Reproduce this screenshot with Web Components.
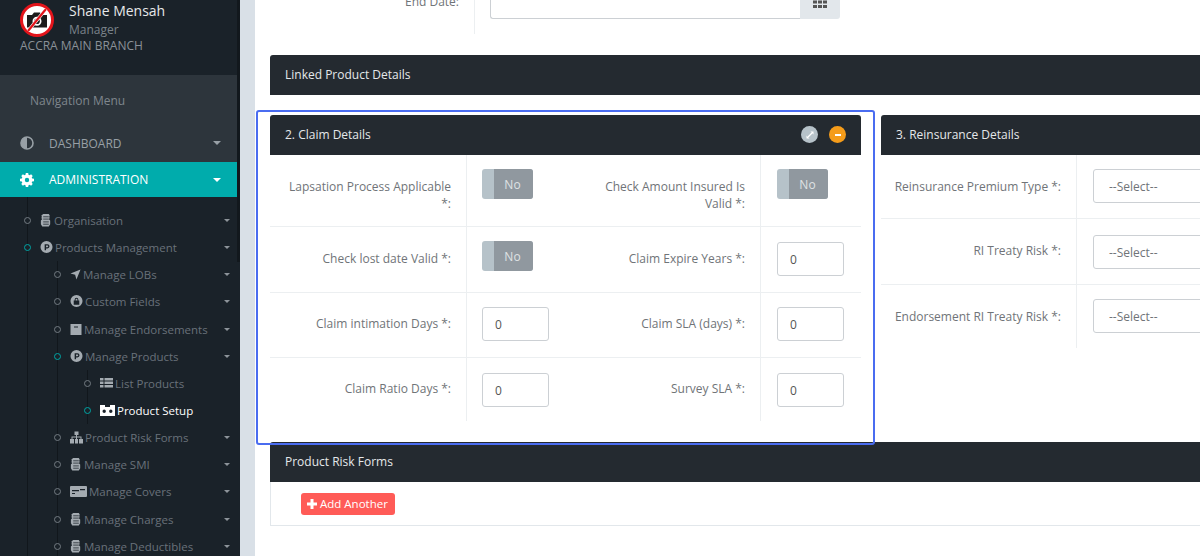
<!DOCTYPE html>
<html>
<head>
<meta charset="utf-8">
<title>Product Setup</title>
<style>
    html, body { margin: 0; height: 100%; overflow: hidden; background: #fff; }
    body { font-family: 'Open Sans', 'Noto Sans', sans-serif; font-size: 12px; }
    .cols { display: flex; gap: 20px; width: 1202px; margin-bottom: 20px; }
    .grid { display: grid; grid-template-columns: 296px 295px; }
</style>
</head>
<body>
<app-shell>
    <side-bar slot="side">
        <nav-item icon="org">Organisation</nav-item>
        <nav-item icon="p" open>Products Management</nav-item>
        <nav-sub>
            <nav-item icon="plane">Manage LOBs</nav-item>
            <nav-item icon="lock">Custom Fields</nav-item>
            <nav-item icon="box">Manage Endorsements</nav-item>
            <nav-item icon="p" open>Manage Products</nav-item>
            <nav-sub>
                <nav-item icon="list" leaf>List Products</nav-item>
                <nav-item icon="vr" leaf active>Product Setup</nav-item>
            </nav-sub>
            <nav-item icon="sitemap">Product Risk Forms</nav-item>
            <nav-item icon="org">Manage SMI</nav-item>
            <nav-item icon="card">Manage Covers</nav-item>
            <nav-item icon="org">Manage Charges</nav-item>
            <nav-item icon="org">Manage Deductibles</nav-item>
        </nav-sub>
    </side-bar>

    <form-row class="top" label="End Date:" lw="205" pt="15" style="width:570px;margin-bottom:20px"><date-field></date-field></form-row>

    <data-panel title="Linked Product Details" class="gap"></data-panel>

    <div class="cols">
        <data-panel title="2. Claim Details" tools>
            <div class="grid">
                <form-row label="Lapsation Process Applicable *:" h="72" lw="197" pl="15" pt="14"><no-toggle></no-toggle></form-row>
                <form-row label="Check Amount Insured Is Valid *:" h="72" pt="14"><no-toggle></no-toggle></form-row>
                <form-row label="Check lost date Valid *:" h="66" lw="197" pl="15" pt="14" lp="24"><no-toggle></no-toggle></form-row>
                <form-row label="Claim Expire Years *:" h="66" pt="15" lp="24"><num-input></num-input></form-row>
                <form-row label="Claim intimation Days *:" h="65" lw="197" pl="15" pt="14" lp="23"><num-input></num-input></form-row>
                <form-row label="Claim SLA (days) *:" h="65" pt="14" lp="23"><num-input></num-input></form-row>
                <form-row label="Claim Ratio Days *:" h="64" lw="197" pl="15" pt="15" lp="23" last><num-input></num-input></form-row>
                <form-row label="Survey SLA *:" h="64" pt="15" lp="23" last><num-input></num-input></form-row>
            </div>
        </data-panel>
        <data-panel title="3. Reinsurance Details">
            <form-row label="Reinsurance Premium Type *:" h="64" lw="196" wide pt="14"><select-box></select-box></form-row>
            <form-row label="RI Treaty Risk *:" h="66" lw="196" wide pt="16" lp="24"><select-box></select-box></form-row>
            <form-row label="Endorsement RI Treaty Risk *:" h="64" lw="196" wide pt="14" lp="24" last><select-box></select-box></form-row>
        </data-panel>
    </div>

    <data-panel title="Product Risk Forms" boxed>
        <add-button>Add Another</add-button>
    </data-panel>
</app-shell>
<highlight-box></highlight-box>

<template id="icons">
    <svg data-i="half" viewBox="0 0 14 14"><circle cx="7" cy="7" r="6" fill="none" stroke="currentColor" stroke-width="1.6"/><path d="M7 1a6 6 0 0 0 0 12z" fill="currentColor"/></svg>
    <svg data-i="cog" viewBox="0 0 14 14"><path fill="currentColor" fill-rule="evenodd" d="M5.8 0h2.4l.3 1.8 1.1.5 1.5-1 1.6 1.6-1 1.5.5 1.1 1.8.3v2.4l-1.8.3-.5 1.1 1 1.5-1.6 1.6-1.5-1-1.1.5-.3 1.8H5.800l-.3-1.800-1.100-.5-1.500 1-1.600-1.600 1-1.500-.5-1.100L0 8.200V5.800l1.800-.3.5-1.100-1-1.500 1.600-1.600 1.500 1 1.100-.5zM7 4.800a2.200 2.200 0 1 0 0 4.400 2.200 2.200 0 0 0 0-4.400z"/></svg>
    <svg data-i="org" viewBox="0 0 12 14"><path fill="currentColor" d="M3 0h6l1 1.500-.5 1.500.5 1.500-1 1 1.500 1.500v4l-1.500 2.500h-7L.5 11V7L2 5.500l-1-1L1.500 3 1 1.500z"/><path stroke="#1a2229" stroke-width=".8" d="M3 3h6M3 5.500h6M3 8.500h6M3 11h6"/></svg>
    <svg data-i="p" viewBox="0 0 14 14"><path fill="currentColor" fill-rule="evenodd" d="M7 0a6.500 6.500 0 1 1 0 13A6.500 6.500 0 0 1 7 0zM5 3.500V10h1.500V8H8a2.250 2.250 0 0 0 0-4.500zm1.500 1.400H8a.85.85 0 0 1 0 1.700H6.500z"/></svg>
    <svg data-i="plane" viewBox="0 0 12 12"><path fill="currentColor" d="M11.500.5 7 11.500 5.600 6.400.5 5z"/></svg>
    <svg data-i="lock" viewBox="0 0 14 14"><path fill="currentColor" fill-rule="evenodd" d="M7 0a6.500 6.500 0 1 1 0 13A6.500 6.500 0 0 1 7 0zM4 6v4.500h6V6H9V5a2 2 0 0 0-4 0v1zm2-1a1 1 0 0 1 2 0v1H6z"/></svg>
    <svg data-i="box" viewBox="0 0 12 12"><path fill="currentColor" fill-rule="evenodd" d="M.5.500h11v11H.500zM4 3v1h4V3z"/></svg>
    <svg data-i="list" viewBox="0 0 13 11"><path fill="currentColor" d="M0 0h3.500v2.500H0zM4.500 0H13v2.500H4.500zM0 3.500h3.500v2.500H0zM4.500 3.500H13v2.500H4.500zM0 7h3.500v2.500H0zM4.500 7H13v2.500H4.500z"/></svg>
    <svg data-i="vr" viewBox="0 0 15 11"><path fill="currentColor" fill-rule="evenodd" d="M0 0h5v2h5V0h5v11H0zM4.200 4.500a1.700 1.700 0 1 0 0 3.400 1.700 1.700 0 0 0 0-3.400zm6.600 0a1.700 1.700 0 1 0 0 3.400 1.700 1.700 0 0 0 0-3.400z"/></svg>
    <svg data-i="sitemap" viewBox="0 0 13 12"><path fill="currentColor" d="M4.500 0h4v3.500H7V5h4.500v2.500H13V12H9V7.500h1.500V6H7v1.500h1V12H5V7.500h1V6H2.500v1.500H4V12H0V7.500h1.500V5H6V3.500H4.500z"/></svg>
    <svg data-i="card" viewBox="0 0 17 11"><path fill="currentColor" fill-rule="evenodd" d="M1 0h15a1 1 0 0 1 1 1v9a1 1 0 0 1-1 1H1a1 1 0 0 1-1-1V1a1 1 0 0 1 1-1zM2 4v1.200h7V4zm0 3v1h3V7zm8-4v1.200h5V3z"/></svg>
</template>

<script>
    const iconTemplate = document.getElementById('icons');
    function icon(name) {
        const svg = iconTemplate.content.querySelector(`[data-i="${name}"]`);
        return svg ? svg.outerHTML : '';
    }

    class AppShell extends HTMLElement {
        connectedCallback() {
            this.attachShadow({ mode: 'open' });
            this.shadowRoot.innerHTML = `
                <style>
                    :host {
                        display: flex;
                        height: 556px;
                        width: 1200px;
                        overflow: hidden;
                        font-family: 'Open Sans', 'Noto Sans', sans-serif;
                        font-size: 12px;
                    }
                    .gutter { width: 15px; background: #d9e0e7; flex: none; }
                    main {
                        flex: 1;
                        min-width: 0;
                        margin-top: -30px;
                        padding-left: 15px;
                        overflow: hidden;
                        background: #fff;
                    }
                </style>
                <slot name="side"></slot>
                <div class="gutter"></div>
                <main><slot></slot></main>
            `;
        }
    }

    class SideBar extends HTMLElement {
        connectedCallback() {
            this.attachShadow({ mode: 'open' });
            this.shadowRoot.innerHTML = `
                <style>
                    :host {
                        display: block;
                        position: relative;
                        width: 240px;
                        flex: none;
                        background: #1a2229;
                        color: #7f868d;
                    }
                    .profile {
                        height: 75px;
                        box-sizing: border-box;
                        padding: 3px 0 0 20px;
                    }
                    .who { display: flex; gap: 15px; height: 34px; }
                    .who svg { width: 34px; height: 34px; flex: none; }
                    .name { color: #e6e8ea; font-size: 14px; line-height: 17px; margin-top: -1px; }
                    .role { line-height: 16px; margin-top: 3px; color: #7a828a; }
                    .branch { line-height: 16px; margin-top: 1px; color: #8a9198; }
                    .menu {
                        width: 237px;
                        background: #2d353c;
                        height: 87px;
                        box-sizing: border-box;
                        padding-top: 18px;
                    }
                    .menu .title { padding-left: 30px; line-height: 16px; color: #7f868d; margin-bottom: 16px; }
                    .top-item {
                        display: flex;
                        align-items: center;
                        height: 36px;
                        padding: 0 16px 0 20px;
                        color: #98a0a6;
                    }
                    .top-item svg { width: 14px; height: 14px; margin-right: 15px; }
                    .top-item span { flex: 1; }
                    .caret { width: 0; height: 0; border: 4px solid transparent; border-top-color: currentColor; border-bottom: 0; }
                    .admin {
                        width: 237px;
                        box-sizing: border-box;
                        height: 35px;
                        background: #00acac;
                        color: #fff;
                    }
                    .tree { padding-top: 10px; margin-left: 27px; border-left: 1px solid #11171c; width: 210px; }
                    .thumb {
                        position: absolute;
                        top: 0;
                        right: 0;
                        width: 3px;
                        height: 262px;
                        background: #12181d;
                    }
                </style>
                <div class="profile">
                    <div class="who">
                        <svg viewBox="0 0 34 34">
                            <circle cx="17" cy="17" r="15.500" fill="#fff" stroke="#e3141b" stroke-width="3"/>
                            <path fill="#1c1c1c" fill-rule="evenodd" d="M7 12h5l2-2.500h6l2 2.500h5v12.500H7zm10 1.800a4.500 4.500 0 1 0 0 9 4.500 4.500 0 0 0 0-9z"/>
                            <circle cx="17" cy="18.300" r="2.800" fill="#1c1c1c"/>
                            <path stroke="#fff" stroke-width="3.500" d="M26 6 8 28"/>
                            <path stroke="#e3141b" stroke-width="2.200" d="M26 6 8 28"/>
                        </svg>
                        <div>
                            <div class="name">Shane Mensah</div>
                            <div class="role">Manager</div>
                        </div>
                    </div>
                    <div class="branch">ACCRA MAIN BRANCH</div>
                </div>
                <div class="menu">
                    <div class="title">Navigation Menu</div>
                    <div class="top-item">${icon('half')}<span>DASHBOARD</span><i class="caret"></i></div>
                </div>
                <div class="top-item admin">${icon('cog')}<span>ADMINISTRATION</span><i class="caret"></i></div>
                <div class="tree"><slot></slot></div>
                <div class="thumb"></div>
            `;
        }
    }

    class NavSub extends HTMLElement {
        connectedCallback() {
            this.attachShadow({ mode: 'open' });
            this.shadowRoot.innerHTML = `
                <style>
                    :host {
                        display: block;
                        margin-left: 29px;
                        border-left: 1px solid #11171c;
                    }
                </style>
                <slot></slot>
            `;
        }
    }

    class NavItem extends HTMLElement {
        connectedCallback() {
            const size = { card: 17, vr: 15, list: 13, sitemap: 13, org: 12, plane: 11, box: 12 };
            const name = this.getAttribute('icon');
            const active = this.hasAttribute('active');
            this.attachShadow({ mode: 'open' });
            this.shadowRoot.innerHTML = `
                <style>
                    :host {
                        display: block;
                        margin-left: -4px;
                        font-size: 11.500px;
                        color: ${active ? '#fff' : '#69717a'};
                    }
                    .row { display: flex; align-items: center; height: 27.150px; padding-right: 8px; }
                    .dot {
                        width: 7px;
                        height: 7px;
                        box-sizing: border-box;
                        border-radius: 50%;
                        border: 1.500px solid ${this.hasAttribute('open') || active ? '#00a5a5' : '#737b82'};
                        background: #1a2229;
                        margin-right: 9px;
                        flex: none;
                    }
                    .ic { display: flex; margin-right: 2px; color: ${active ? '#fff' : '#a4abb1'}; }
                    svg { width: ${size[name] || 13}px; height: 13px; }
                    .label { flex: 1; white-space: nowrap; }
                    .caret { width: 0; height: 0; border: 3.500px solid transparent; border-top-color: #8d949a; border-bottom: 0; }
                </style>
                <div class="row">
                    <i class="dot"></i>
                    <span class="ic">${icon(name)}</span>
                    <span class="label"><slot></slot></span>
                    ${this.hasAttribute('leaf') ? '' : '<i class="caret"></i>'}
                </div>
            `;
        }
    }

    class DataPanel extends HTMLElement {
        connectedCallback() {
            const tools = this.hasAttribute('tools') ? `
                <div class="tools">
                    <span class="tool grey"><svg viewBox="0 0 10 10"><path d="M3 7 7 3" stroke="#fff" stroke-width="1.300"/><path d="M5.500 1.500h3v3zM1.500 5.500v3h3z" fill="#fff"/></svg></span>
                    <span class="tool orange"><svg viewBox="0 0 10 10"><path d="M2 5h6" stroke="#fff" stroke-width="2"/></svg></span>
                </div>` : '';
            this.attachShadow({ mode: 'open' });
            this.shadowRoot.innerHTML = `
                <style>
                    :host {
                        display: block;
                        width: 591px;
                        flex: none;
                        background: #fff;
                        color: #707478;
                    }
                    :host(.gap), :host([boxed]) { width: 945px; margin-bottom: 20px; }
                    header {
                        display: flex;
                        align-items: center;
                        justify-content: space-between;
                        height: 40px;
                        box-sizing: border-box;
                        padding: 0 15px 1px;
                        background: #242a30;
                        border-radius: 3px 3px 0 0;
                        color: #e4e8ea;
                        font-size: 12px;
                    }
                    .tools { display: flex; gap: 11px; }
                    .tool { width: 17px; height: 17px; border-radius: 50%; display: flex; align-items: center; justify-content: center; }
                    .tool svg { width: 10px; height: 10px; }
                    .grey { background: #b6c2c9; }
                    .orange { background: #f59c1a; }
                    :host([boxed]) .body {
                        border: 1px solid #e2e7eb;
                        border-top: 0;
                        padding: 11px 30px 10px;
                    }
                </style>
                <header><span>${this.getAttribute('title')}</span>${tools}</header>
                <div class="body"><slot></slot></div>
            `;
            this.removeAttribute('title');
        }
    }

    class FormRow extends HTMLElement {
        connectedCallback() {
            const h = this.getAttribute('h') || 65;
            const lw = this.getAttribute('lw') || 195;
            const pt = this.getAttribute('pt') || 15;
            const pl = this.getAttribute('pl') || 16;
            const lp = this.getAttribute('lp') || 24;
            const plain = this.hasAttribute('last') || this.classList.contains('top');
            this.attachShadow({ mode: 'open' });
            this.shadowRoot.innerHTML = `
                <style>
                    :host {
                        display: flex;
                        min-height: ${h}px;
                        box-sizing: border-box;
                        color: #707478;
                        border-bottom: 1px solid ${plain ? 'transparent' : '#eceff1'};
                    }
                    label {
                        width: ${lw}px;
                        flex: none;
                        box-sizing: border-box;
                        padding: ${lp}px 15px 0 ${this.hasAttribute('wide') ? 0 : 15}px;
                        text-align: right;
                        line-height: 16.800px;
                        border-right: 1px solid #eceff1;
                    }
                    .ctl { padding: ${pt}px 0 0 ${pl}px; flex: 1; min-width: 0; }
                </style>
                <label>${this.getAttribute('label')}</label>
                <div class="ctl"><slot></slot></div>
            `;
        }
    }

    class NoToggle extends HTMLElement {
        connectedCallback() {
            this.attachShadow({ mode: 'open' });
            this.shadowRoot.innerHTML = `
                <style>
                    :host {
                        display: flex;
                        width: 51px;
                        height: 30px;
                        border-radius: 3px;
                        overflow: hidden;
                        background: #b6c2c9;
                    }
                    .off {
                        margin-left: 12px;
                        flex: 1;
                        background: #90989f;
                        color: #dfe2e4;
                        display: flex;
                        align-items: center;
                        justify-content: center;
                        padding-right: 2px;
                    }
                </style>
                <div class="off">No</div>
            `;
        }
    }

    class NumInput extends HTMLElement {
        connectedCallback() {
            this.attachShadow({ mode: 'open' });
            this.shadowRoot.innerHTML = `
                <style>
                    :host {
                        display: flex;
                        align-items: center;
                        width: 67px;
                        height: 34px;
                        box-sizing: border-box;
                        padding-left: 12px;
                        border: 1px solid #ccd0d4;
                        border-radius: 3px;
                        color: #555;
                        background: #fff;
                    }
                </style>
                0
            `;
        }
    }

    class SelectBox extends HTMLElement {
        connectedCallback() {
            this.attachShadow({ mode: 'open' });
            this.shadowRoot.innerHTML = `
                <style>
                    :host {
                        display: flex;
                        align-items: center;
                        width: 300px;
                        height: 34px;
                        box-sizing: border-box;
                        padding-left: 15px;
                        border: 1px solid #ccd0d4;
                        border-radius: 3px;
                        color: #707478;
                    }
                </style>
                --Select--
            `;
        }
    }

    class DateField extends HTMLElement {
        connectedCallback() {
            this.attachShadow({ mode: 'open' });
            this.shadowRoot.innerHTML = `
                <style>
                    :host { display: flex; width: 350px; height: 34px; margin-left: -1px; }
                    .box { flex: 1; border: 1px solid #ccd0d4; border-right: 0; border-radius: 3px 0 0 3px; }
                    .add {
                        width: 40px;
                        background: #e2e7eb;
                        border-radius: 0 3px 3px 0;
                        display: flex;
                        align-items: center;
                        justify-content: center;
                    }
                    svg { width: 14px; height: 12px; }
                </style>
                <div class="box"></div>
                <div class="add">
                    <svg viewBox="0 0 14 12"><path fill="#555" d="M0 0h4v3H0zM5 0h4v3H5zM10 0h4v3h-4zM0 4.500h4v3H0zM5 4.500h4v3H5zM10 4.500h4v3h-4zM0 9h4v3H0zM5 9h4v3H5zM10 9h4v3h-4z"/></svg>
                </div>
            `;
        }
    }

    class AddButton extends HTMLElement {
        connectedCallback() {
            this.attachShadow({ mode: 'open' });
            this.shadowRoot.innerHTML = `
                <style>
                    :host {
                        display: inline-flex;
                        align-items: center;
                        gap: 3px;
                        height: 22px;
                        padding: 0 7px 1px 6px;
                        box-sizing: border-box;
                        background: #ff5b57;
                        border-radius: 3px;
                        color: #fff;
                        font-size: 11.500px;
                    }
                    svg { width: 10px; height: 10px; }
                </style>
                <svg viewBox="0 0 10 10"><path fill="#fff" d="M3.500 0h3v3.500H10v3H6.500V10h-3V6.500H0v-3h3.500z"/></svg>
                <slot></slot>
            `;
        }
    }

    class HighlightBox extends HTMLElement {
        connectedCallback() {
            this.attachShadow({ mode: 'open' });
            this.shadowRoot.innerHTML = `
                <style>
                    :host {
                        position: absolute;
                        left: 256px;
                        top: 110px;
                        width: 619px;
                        height: 335px;
                        box-sizing: border-box;
                        border: 2px solid #4a6cf0;
                        border-radius: 3px;
                        pointer-events: none;
                    }
                </style>
            `;
        }
    }

    customElements.define('date-field', DateField);
    customElements.define('no-toggle', NoToggle);
    customElements.define('num-input', NumInput);
    customElements.define('select-box', SelectBox);
    customElements.define('add-button', AddButton);
    customElements.define('form-row', FormRow);
    customElements.define('data-panel', DataPanel);
    customElements.define('nav-item', NavItem);
    customElements.define('nav-sub', NavSub);
    customElements.define('side-bar', SideBar);
    customElements.define('app-shell', AppShell);
    customElements.define('highlight-box', HighlightBox);
</script>
</body>
</html>
